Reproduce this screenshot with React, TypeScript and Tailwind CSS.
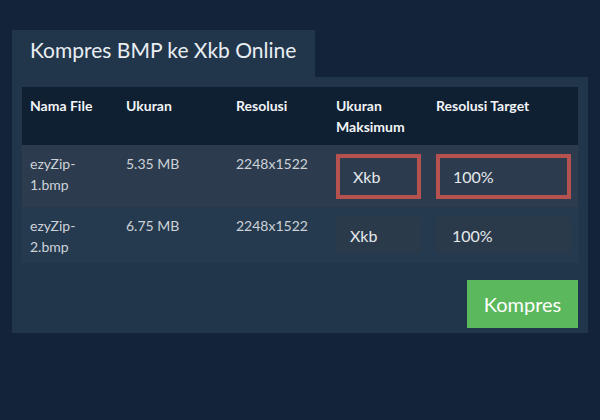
const rows = [
  { name: ["ezyZip-", "1.bmp"], size: "5.35 MB", res: "2248x1522", active: true },
  { name: ["ezyZip-", "2.bmp"], size: "6.75 MB", res: "2248x1522", active: false },
];

export default function App() {
  return (
    <div className="h-[420px] w-full bg-[#12233a] px-[12px] pt-[30px] font-['Lato','Open_Sans',sans-serif]">
      <div className="flex h-[47px] w-[303px] items-start bg-[#22364b] pl-[18px] pt-[5px]">
        <h1 className="text-[21px] leading-[30px] text-[#e9eef3]">Kompres BMP ke Xkb Online</h1>
      </div>
      <div className="bg-[#22364b] px-[10px] pt-[10px] pb-[5px]">
        <div className="text-[14px] leading-[21px]">
          <div className="grid grid-cols-[96px_110px_100px_100px_1fr] bg-[#0f2032] font-bold text-[#f2f4f6]">
            <div className="p-[8px]">Nama File</div>
            <div className="p-[8px]">Ukuran</div>
            <div className="p-[8px]">Resolusi</div>
            <div className="p-[8px]">
              Ukuran
              <br />
              Maksimum
            </div>
            <div className="p-[8px]">Resolusi Target</div>
          </div>
          {rows.map((r) => (
            <div
              key={r.name[1]}
              className={`grid grid-cols-[96px_110px_100px_100px_1fr] text-[#ccd2d8] ${
                r.active ? "bg-[#2c3c4e]" : "bg-[#263a4f]"
              }`}
            >
              <div className={`px-[8px] pt-[8px] ${r.active ? "pb-[8px]" : "pb-[6px]"}`}>
                {r.name[0]}
                <br />
                {r.name[1]}
              </div>
              <div className="p-[8px]">{r.size}</div>
              <div className="p-[8px]">{r.res}</div>
              <div className={`px-[8px] ${r.active ? "pt-[9px] pb-[8px]" : "pt-[10px]"}`}>
                <div
                  className={`flex w-[85px] items-center text-[16px] text-[#e6e9ec] ${
                    r.active
                      ? "h-[45px] border-4 border-[#b5524f] pl-[13px]"
                      : "h-[36px] bg-[#2a3a4b] pl-[14px]"
                  }`}
                >
                  Xkb
                </div>
              </div>
              <div className={`px-[8px] ${r.active ? "pt-[9px] pb-[8px]" : "pt-[10px]"}`}>
                <div
                  className={`flex w-[135px] items-center text-[16px] text-[#e6e9ec] ${
                    r.active
                      ? "h-[45px] border-4 border-[#b5524f] pl-[13px]"
                      : "h-[36px] bg-[#2a3a4b] pl-[16px]"
                  }`}
                >
                  100%
                </div>
              </div>
            </div>
          ))}
        </div>
        <div className="mt-[17px] flex justify-end">
          <button className="h-[48px] w-[111px] bg-[#5cb85c] text-[20px] text-white">Kompres</button>
        </div>
      </div>
    </div>
  );
}
